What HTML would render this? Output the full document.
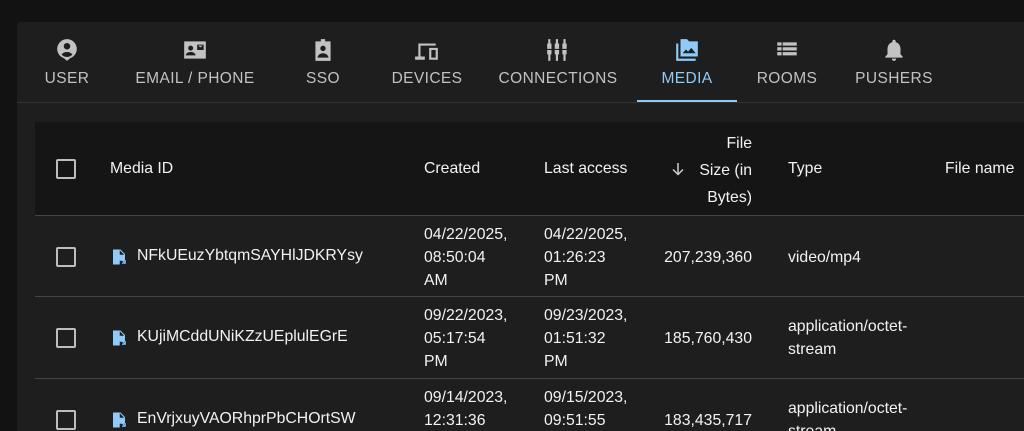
<!DOCTYPE html>
<html><head><style>
*{margin:0;padding:0;box-sizing:border-box}
html,body{width:1024px;height:431px;overflow:hidden}
body{background:#121212;font-family:"Liberation Sans",sans-serif;position:relative;color:#fff}
.panel{position:absolute;left:17px;top:22px;width:1007px;height:409px;background:#1e1e1e;border-radius:4px 0 0 0}
.tab{position:absolute;top:37px;width:130px;margin-left:-65px;text-align:center;color:#c2c2c2;font-size:15.5px;letter-spacing:.4px}
.tab svg{display:block;margin:0 auto 6px;width:26px;height:26px;fill:#c2c2c2}
.tab.act{color:#90caf9}.tab.act svg{fill:#90caf9}
.tab span{display:block;line-height:20px}
.div{position:absolute;left:17px;top:102px;width:1007px;height:1px;background:#333}
.ul{position:absolute;left:637px;top:100px;width:100px;height:2px;background:#90caf9}
.thead{position:absolute;left:35px;top:122px;width:989px;height:93px;background:#151515}
.row{position:absolute;left:35px;width:989px;height:82px;border-top:1px solid #444;background:#1e1e1e;overflow:hidden}
.t{position:absolute;font-size:15.8px;line-height:23px;color:#f2f2f2;white-space:nowrap}
.cb{position:absolute;left:21px;width:20px;height:20px;border:2px solid #bdbdbd;border-radius:2px}
.fi{position:absolute;left:75px;width:18px;height:18px}
</style></head><body>
<div class="panel"></div>
<div class="tab" style="left:67px"><svg viewBox="0 0 24 24"><path d="M12 2a9 9 0 0 0-3 17.5L12 22l3-2.5A9 9 0 0 0 12 2zm0 3.5a3 3 0 1 1 0 6 3 3 0 0 1 0-6zm0 13a7 7 0 0 1-5-2.3c1-1.6 3-2.4 5-2.4s4 .8 5 2.4a7 7 0 0 1-5 2.3z"/></svg><span>USER</span></div>
<div class="tab" style="left:195px"><svg viewBox="0 0 24 24"><path d="M2 4h20v16H2zM8 8a2.3 2.3 0 1 0 0 4.6A2.3 2.3 0 0 0 8 8zm-4.5 9h9c0-2-2-3.2-4.5-3.2S3.5 15 3.5 17zM14 7v5h6V7zm.8 1h4.4L17 9.6z"/></svg><span>EMAIL / PHONE</span></div>
<div class="tab" style="left:323px"><svg viewBox="0 0 24 24"><path d="M5 4h5V2h4v2h5v18H5zM12 8a2.5 2.5 0 1 0 0 5 2.5 2.5 0 0 0 0-5zm-5 11h10c0-2.3-2.5-4-5-4s-5 1.7-5 4z"/></svg><span>SSO</span></div>
<div class="tab" style="left:427px"><svg viewBox="0 0 24 24"><path d="M4 6h16v2H6v10h4v3H1v-3h3zM14 10h8v11h-8zm2 2v7h4v-7z"/></svg><span>DEVICES</span></div>
<div class="tab" style="left:558px"><svg viewBox="0 0 24 24"><path d="M3 2h2v4h1v5H2V6h1zm7 0h2v4h1v5H9V6h1zm7 0h2v4h1v5h-4V6h1zM2 12h4v4H5v6H3v-6H2zm7 0h4v4h-1v6h-2v-6H9zm7 0h4v4h-1v6h-2v-6h-1z"/></svg><span>CONNECTIONS</span></div>
<div class="tab act" style="left:687px"><svg viewBox="0 0 24 24"><path d="M2 6h2v14h16v2H2zM6 2h6l2 2h8v14H6zm2 13h12l-4-5-3 3.5-2-2z"/></svg><span>MEDIA</span></div>
<div class="tab" style="left:787px"><svg viewBox="0 0 24 24"><path d="M3 5h4v3H3zm5 0h13v3H8zM3 9.5h4v3H3zm5 0h13v3H8zM3 14h4v3H3zm5 0h13v3H8z"/></svg><span>ROOMS</span></div>
<div class="tab" style="left:894px"><svg viewBox="0 0 24 24"><path d="M12 22a2 2 0 0 0 2-2h-4a2 2 0 0 0 2 2zm6-6v-5c0-3-1.6-5.6-4.5-6.3V4a1.5 1.5 0 0 0-3 0v.7C7.6 5.4 6 8 6 11v5l-2 2v1h16v-1z"/></svg><span>PUSHERS</span></div>
<div class="div"></div><div class="ul"></div>

<div class="thead">
<div class="cb" style="top:37px"></div>
<div class="t" style="left:75px;top:35px">Media ID</div>
<div class="t" style="left:389px;top:35px">Created</div>
<div class="t" style="left:509px;top:35px">Last access</div>
<svg style="position:absolute;left:635px;top:39px;width:16px;height:16px" viewBox="0 0 16 16"><path d="M8 2v11M3 8.5l5 5 5-5" stroke="#ccc" stroke-width="1.5" fill="none"/></svg>
<div class="t" style="right:272px;top:8px;text-align:right;line-height:27px">File<br>Size (in<br>Bytes)</div>
<div class="t" style="left:753px;top:35px">Type</div>
<div class="t" style="left:910px;top:35px">File name</div>
</div>

<div class="row" style="top:215px">
<div class="cb" style="top:31px"></div>
<svg class="fi" style="top:32px" viewBox="0 0 24 24"><path fill="#90caf9" d="M4 2h10l6 6v9h-7v5H4zM13 3v6h6z"/><path fill="#90caf9" d="M15 16l1-1 3.5 3.5V16H21v5h-5v-1.5h2.5z"/></svg>
<div class="t" style="left:102px;top:28px">NFkUEuzYbtqmSAYHlJDKRYsy</div>
<div class="t" style="left:389px;top:7px">04/22/2025,<br>08:50:04<br>AM</div>
<div class="t" style="left:509px;top:7px">04/22/2025,<br>01:26:23<br>PM</div>
<div class="t" style="right:272px;top:30px">207,239,360</div>
<div class="t" style="left:753px;top:30px">video/mp4</div>
</div>

<div class="row" style="top:296px">
<div class="cb" style="top:31px"></div>
<svg class="fi" style="top:32px" viewBox="0 0 24 24"><path fill="#90caf9" d="M4 2h10l6 6v9h-7v5H4zM13 3v6h6z"/><path fill="#90caf9" d="M15 16l1-1 3.5 3.5V16H21v5h-5v-1.5h2.5z"/></svg>
<div class="t" style="left:102px;top:28px">KUjiMCddUNiKZzUEplulEGrE</div>
<div class="t" style="left:389px;top:7px">09/22/2023,<br>05:17:54<br>PM</div>
<div class="t" style="left:509px;top:7px">09/23/2023,<br>01:51:32<br>PM</div>
<div class="t" style="right:272px;top:30px">185,760,430</div>
<div class="t" style="left:753px;top:18px">application/octet-<br>stream</div>
</div>

<div class="row" style="top:378px;height:53px">
<div class="cb" style="top:31px"></div>
<svg class="fi" style="top:32px" viewBox="0 0 24 24"><path fill="#90caf9" d="M4 2h10l6 6v9h-7v5H4zM13 3v6h6z"/><path fill="#90caf9" d="M15 16l1-1 3.5 3.5V16H21v5h-5v-1.5h2.5z"/></svg>
<div class="t" style="left:102px;top:28px">EnVrjxuyVAORhprPbCHOrtSW</div>
<div class="t" style="left:389px;top:7px">09/14/2023,<br>12:31:36<br>PM</div>
<div class="t" style="left:509px;top:7px">09/15/2023,<br>09:51:55<br>AM</div>
<div class="t" style="right:272px;top:30px">183,435,717</div>
<div class="t" style="left:753px;top:18px">application/octet-<br>stream</div>
</div>
</body></html>
